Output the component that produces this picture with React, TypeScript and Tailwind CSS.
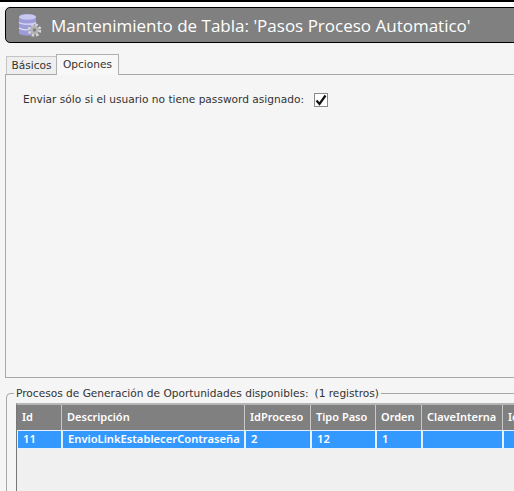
function TableIcon() {
  return (
    <svg width="24" height="24" viewBox="0 0 24 24" className="shrink-0">
      <path d="M1 4c0-2 4-3 8.500-3s8.500 1 8.500 3v16c0 1.500-4 2.500-8.500 2.500S1 21.500 1 20z" fill="#9c9cd8" />
      <ellipse cx="9.500" cy="4" rx="8.500" ry="2.800" fill="#c8c8f0" />
      <path d="M1 9.500c3 2.200 14 2.200 17 0M1 15c3 2 7 2 10 1.500" stroke="#dedef6" strokeWidth="1.200" fill="none" />
      <circle cx="16.500" cy="17" r="5.200" fill="none" stroke="#d4d4d4" strokeWidth="3.200" strokeDasharray="2.400 1.700" />
      <circle cx="16.500" cy="17" r="4" fill="#b4b4b4" />
      <circle cx="16.500" cy="17" r="1.800" fill="#808080" />
    </svg>
  );
}

const columns = [
  { label: "Id", width: "w-[45px]", value: "11" },
  { label: "Descripción", width: "w-[183px]", value: "EnvioLinkEstablecerContraseña" },
  { label: "IdProceso", width: "w-[66px]", value: "2" },
  { label: "Tipo Paso", width: "w-[65px]", value: "12" },
  { label: "Orden", width: "w-[46px]", value: "1" },
  { label: "ClaveInterna", width: "w-[81px]", value: "" },
  { label: "IdPlantilla", width: "w-[80px]", value: "" },
];

export default function App() {
  return (
    <div className="h-[491px] w-[514px] overflow-hidden bg-[#f5f5f5] font-['DejaVu_Sans',sans-serif] text-[#333]">
      <div className="h-[2px] bg-black" />
      <div className="h-[5px] bg-white" />

      <div className="ml-[5px] flex h-[36px] w-[520px] items-center gap-[9px] rounded-l-[5px] border border-black bg-[#808080] pl-[12px]">
        <TableIcon />
        <h1 className="whitespace-nowrap font-['Open_Sans',sans-serif] text-[17px] leading-none text-white">
          Mantenimiento de Tabla: 'Pasos Proceso Automatico'
        </h1>
      </div>

      <div className="mt-[11px] flex h-[20px] items-end pl-[6px] text-[10.6px]">
        <div className="flex h-[18px] w-[50px] items-center justify-center border-l border-t border-[#c4c4c4] bg-[#eeeeee]">
          Básicos
        </div>
        <div className="relative top-px flex h-[21px] w-[63px] items-center justify-center border-x border-t border-[#b0b0b0] bg-[#f8f8f8]">
          Opciones
        </div>
      </div>

      <div className="ml-[5px] h-[304px] w-[520px] border border-[#a8a8a8] pl-[17px] pt-[17px] text-[10.6px]">
        <div className="flex items-center gap-[10px]">
          <span>Enviar sólo si el usuario no tiene password asignado:</span>
          <span className="flex h-[14px] w-[14px] items-center justify-center border border-[#8a8a8a] bg-white">
            <svg width="12" height="12" viewBox="0 0 12 12" fill="none">
              <path d="M1.500 6.500 4.500 10 10.500 1.500" stroke="#111" strokeWidth="2.200" />
            </svg>
          </span>
        </div>
      </div>

      <div className="relative ml-[6px] mt-[15px] h-[110px] w-[520px] rounded-tl-[5px] border-l border-t border-[#a8a8a8] pl-[9px] pt-[9px]">
        <div className="absolute -top-[9px] left-[7px] flex gap-[6px] whitespace-nowrap bg-[#f5f5f5] px-[2px] text-[10.6px] leading-[16px]">
          <span>Procesos de Generación de Oportunidades disponibles:</span>
          <span>(1 registros)</span>
        </div>

        <div className="h-[100px] w-[600px] border-l border-t-2 border-l-[#777] border-t-[#b5b5b5] bg-[#f0f0f0]">
          <div className="flex h-[25px] bg-[#808080]">
            {columns.map((col) => (
              <div
                key={col.label}
                className={`${col.width} flex shrink-0 items-center whitespace-nowrap border-r border-[#c8c8c8] pl-[5px] font-['Noto_Sans',sans-serif] text-[11px] font-semibold text-white`}
              >
                {col.label}
              </div>
            ))}
          </div>
          <div className="flex h-[19px]">
            {columns.map((col) => (
              <div
                key={col.label}
                className={`${col.width} flex shrink-0 items-center whitespace-nowrap border border-[#e8f0fa] bg-[#3399ff] pl-[5px] font-['Noto_Sans',sans-serif] text-[11.2px] font-semibold text-white`}
              >
                {col.value}
              </div>
            ))}
          </div>
        </div>
      </div>
    </div>
  );
}
